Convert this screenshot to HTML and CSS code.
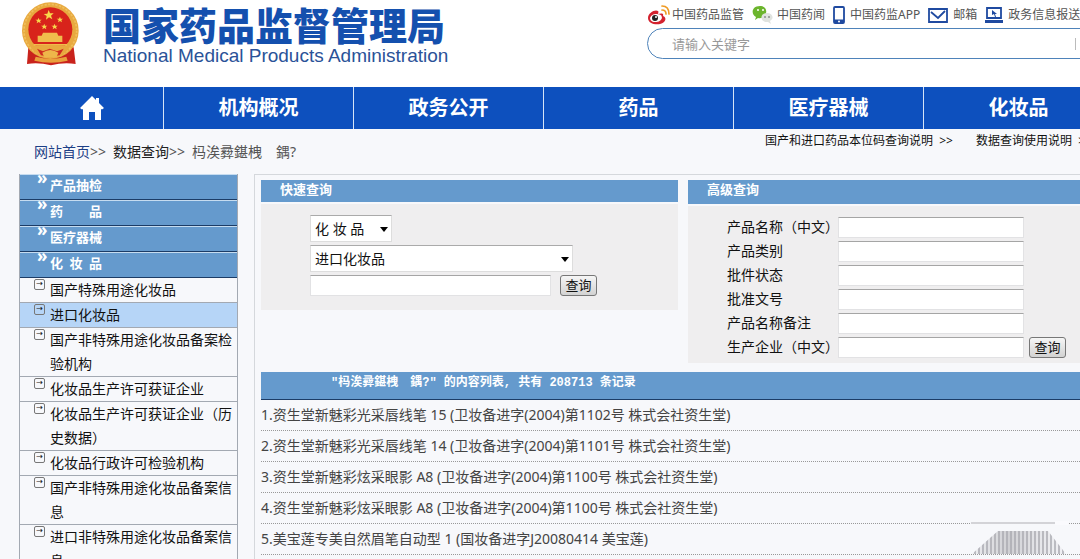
FILE: index.html
```
<!DOCTYPE html>
<html lang="zh-CN">

<head>
    <meta charset="UTF-8">
    <title>国家药品监督管理局 - 数据查询</title>
    <link rel="stylesheet" href="styles.css">
</head>

<body>
    <header>
        <a class="brand" href="#">
            <svg class="emblem" viewBox="12 0 180 198" aria-hidden="true">
                <path d="M40 142 L36 192 Q70 186 108 196 Q146 186 182 192 L176 142 Z" fill="#c9231c" />
                <path d="M62 170 Q108 182 154 170 L158 182 Q108 194 58 182 Z" fill="#e9a03c" />
                <circle cx="106" cy="92" r="85" fill="#e8a93f" />
                <circle cx="106" cy="92" r="79" fill="none" stroke="#f0bf5c" stroke-width="5" stroke-dasharray="7 4" />
                <circle cx="106" cy="88" r="66" fill="#d8231b" />
                <path d="M101 30l4 10 11 0-8 7 4 11-10-6-9 7 2-11-9-6 11-1z" fill="#f8d84c" />
                <path d="M71 53l2 6 7 0-5 4 2 7-6-4-6 4 2-7-6-4 7 0zM135 50l2 6 7 0-5 4 2 7-6-4-6 4 2-7-6-4 7 0zM88 71l2 6 7 0-5 4 2 7-6-4-6 4 2-7-6-4 7 0zM119 71l2 6 7 0-5 4 2 7-6-4-6 4 2-7-6-4 7 0z" fill="#f8d84c" />
                <path d="M84 98h42l4 9h12v19H68v-19h12z" fill="#f0bd4c" />
                <path d="M56 132h100v5H56z" fill="#f0bd4c" />
                <path d="M48 140 Q106 128 164 140 Q150 172 106 174 Q62 172 48 140Z" fill="#e8a93f" />
                <path d="M66 146l18 8 20-8 22 8 20-8-12 20-28 4-28-4z" fill="#cf2c1f" />
                <path d="M82 158 Q106 142 130 158 L124 172 H88Z" fill="#eeb64a" />
            </svg>
            <div class="brand_text">
                <h1>国家药品监督管理局</h1>
                <p>National Medical Products Administration</p>
            </div>
        </a>
        <div class="tools">
            <nav class="quick_links">
                <a class="weibo" href="#">
                    <svg width="23" height="20" viewBox="0 0 23 20" aria-hidden="true">
                        <path d="M1 13C1 8 8 4 11 6c1 1 0 2 0 3 3-1 6-1 5 2 3 1 3 4 1 6-4 4-16 3-16-4z" fill="#d3222f" />
                        <ellipse cx="9" cy="13" rx="6" ry="4" fill="#fff" transform="rotate(-8 9 13)" />
                        <circle cx="8" cy="13" r="3" fill="#222" />
                        <circle cx="9" cy="12" r="1" fill="#fff" />
                        <path d="M15 5q4 0 4 4M15 1q7 0 7 8" fill="none" stroke="#ef9c26" stroke-width="1.7" stroke-linecap="round" />
                    </svg>
                    中国药品监管
                </a>
                <a class="wechat" href="#">
                    <svg width="23" height="20" viewBox="0 0 23 20" aria-hidden="true">
                        <path d="M8 1c-9 0-9 9-4 11l-1 3 3-2c9 2 12-12 2-12z" fill="#6cb52d" />
                        <path d="M15 8c-8 0-7 10 1 9l3 2-1-3c5-3 2-8-3-8z" fill="#e0e3df" />
                        <circle cx="6" cy="5" r="1" fill="#fff" />
                        <circle cx="11" cy="5" r="1" fill="#fff" />
                        <circle cx="13" cy="12" r="1" fill="#8c918b" />
                        <circle cx="17" cy="12" r="1" fill="#8c918b" />
                    </svg>
                    中国药闻
                </a>
                <a class="app" href="#">
                    <svg width="12" height="18" viewBox="0 0 12 18" aria-hidden="true">
                        <rect x="1" y="1" width="10" height="16" rx="1" fill="#fff" stroke="#1f4aa0" stroke-width="1.8" />
                        <path d="M1 13.500h10V17H1z" fill="#1f4aa0" />
                        <circle cx="6" cy="15.500" r="1" fill="#fff" />
                    </svg>
                    中国药监APP
                </a>
                <a class="mail" href="#">
                    <svg width="20" height="15" viewBox="0 0 20 15" aria-hidden="true">
                        <path d="M1 1h18v13H1zM3 4l7 6 7-7" fill="#fff" stroke="#1f4aa0" stroke-width="1.8" />
                    </svg>
                    邮箱
                </a>
                <a class="report" href="#">
                    <svg width="18" height="17" viewBox="0 0 18 17" aria-hidden="true">
                        <path d="M2 1h14v10H2z" fill="#fff" stroke="#1f4aa0" stroke-width="1.800" />
                        <path d="M0 13h18v3H0z" fill="#1f4aa0" />
                        <path d="M7 3l5 4-2 0 1 3-1 0-1-3-2 1z" fill="#1f4aa0" />
                    </svg>
                    政务信息报送
                </a>
            </nav>
            <form class="search">
                <input type="search" placeholder="请输入关键字" aria-label="请输入关键字">
                <button type="button" aria-label="搜索"></button>
            </form>
        </div>
    </header>

    <nav class="menu">
        <a class="home" href="#" aria-label="首页">
            <svg width="24" height="24" viewBox="0 0 24 24" aria-hidden="true">
                <path d="M12 0 0 12l2 1.500 1-.5v11h6v-8h6v8h6V13l1 .5 2-1.500-5-5V2h-3v2z" fill="#fff" />
            </svg>
        </a>
        <a href="#">机构概况</a>
        <a href="#">政务公开</a>
        <a href="#">药品</a>
        <a href="#">医疗器械</a>
        <a href="#">化妆品</a>
    </nav>

    <div class="crumb_bar">
        <p class="crumbs"><a href="#">网站首页</a>&gt;&gt;&ensp;<a class="current" href="#">数据查询</a>&gt;&gt;&ensp;杩涘彛鍖栧&#12288;鍝?</p>
        <div class="help_links">
            <a href="#">国产和进口药品本位码查询说明 &nbsp;&gt;&gt;</a>
            <a href="#">数据查询使用说明 &nbsp;&gt;&gt;</a>
        </div>
    </div>

    <div class="content">
        <aside>
            <h2>产品抽检</h2>
            <h2>药&#12288;&#12288;品</h2>
            <h2>医疗器械</h2>
            <h2>化&ensp;妆&ensp;品</h2>
            <ul>
                <li><a href="#">国产特殊用途化妆品</a></li>
                <li class="valgt"><a href="#">进口化妆品</a></li>
                <li><a href="#">国产非特殊用途化妆品备案检验机构</a></li>
                <li><a href="#">化妆品生产许可获证企业</a></li>
                <li><a href="#">化妆品生产许可获证企业（历史数据）</a></li>
                <li><a href="#">化妆品行政许可检验机构</a></li>
                <li><a href="#">国产非特殊用途化妆品备案信息</a></li>
                <li><a href="#">进口非特殊用途化妆品备案信息</a></li>
            </ul>
        </aside>

        <main>
            <div class="queries">
                <section class="quick">
                    <h2>快速查询</h2>
                    <form>
                        <div class="select short">
                            <select aria-label="类别">
                                <option>化 妆 品</option>
                            </select>
                        </div>
                        <div class="select">
                            <select aria-label="数据库">
                                <option>进口化妆品</option>
                            </select>
                        </div>
                        <div class="line">
                            <input type="text" aria-label="关键字">
                            <button type="button">查询</button>
                        </div>
                    </form>
                </section>

                <section class="advanced">
                    <h2>高级查询</h2>
                    <form>
                        <label for="navn">产品名称（中文）</label>
                        <input type="text" id="navn">
                        <label for="type">产品类别</label>
                        <input type="text" id="type">
                        <label for="status">批件状态</label>
                        <input type="text" id="status">
                        <label for="nummer">批准文号</label>
                        <input type="text" id="nummer">
                        <label for="note">产品名称备注</label>
                        <input type="text" id="note">
                        <label for="firma">生产企业（中文）</label>
                        <input type="text" id="firma">
                        <button type="button">查询</button>
                    </form>
                </section>
            </div>

            <section class="results">
                <h2>"杩涘彛鍖栧&#12288;鍝?" 的内容列表, 共有 208713 条记录</h2>
                <ul>
                    <li><a href="#">1.资生堂新魅彩光采唇线笔 15 (卫妆备进字(2004)第1102号 株式会社资生堂)</a></li>
                    <li><a href="#">2.资生堂新魅彩光采唇线笔 14 (卫妆备进字(2004)第1101号 株式会社资生堂)</a></li>
                    <li><a href="#">3.资生堂新魅彩炫采眼影 A8 (卫妆备进字(2004)第1100号 株式会社资生堂)</a></li>
                    <li><a href="#">4.资生堂新魅彩炫采眼影 A8 (卫妆备进字(2004)第1100号 株式会社资生堂)</a></li>
                    <li><a href="#">5.美宝莲专美自然眉笔自动型 1 (国妆备进字J20080414 美宝莲)</a></li>
                </ul>
            </section>
        </main>
    </div>

    <svg class="stamp" viewBox="0 0 110 36" aria-hidden="true">
        <defs>
            <pattern id="bars" width="4" height="36" patternUnits="userSpaceOnUse">
                <path d="M1 0v36" stroke="#a9a9b0" stroke-width="1.500" />
            </pattern>
            <linearGradient id="fade">
                <stop offset="0" stop-color="#d5d5d8" stop-opacity="0.3" />
                <stop offset="0.400" stop-color="#cfcfd3" />
                <stop offset="1" stop-color="#e8e8ec" stop-opacity="0.4" />
            </linearGradient>
        </defs>
        <path d="M1 2h84" stroke="#d3d3d7" stroke-width="2" />
        <path d="M85 0h14v4H85z" fill="#fafafd" />
        <path d="M2 33 28 10h50l18 23z" fill="url(#fade)" />
        <path d="M2 33 28 10h50l18 23z" fill="url(#bars)" />
    </svg>
</body>

</html>
```
FILE: styles.css
```
* {
    box-sizing: border-box;
}

html {
    overflow: hidden;
}

body {
    margin: 0;
    background: #f7f8fb;
    font-family: "Noto Sans", "Noto Sans CJK SC", sans-serif;
    font-size: 14px;
    line-height: 24px;
    color: #333;
}

h1,
h2,
p,
ul {
    margin: 0;
    padding: 0;
}

ul {
    list-style: none;
}

a {
    color: inherit;
    text-decoration: none;
}

input,
select,
button {
    font: inherit;
    color: #111;
    margin: 0;
}

header {
    background: white;
    display: flex;
    height: 87px;
    padding-left: 19px;
    overflow: hidden;
}

.brand {
    display: flex;
    flex: none;
    gap: 24px;
    width: 628px;
}

.emblem {
    width: 60px;
    height: 66px;
}

.brand h1 {
    font-size: 38px;
    line-height: 40px;
    padding: 5px 0 1px;
    font-weight: 900;
    color: #1450ae;
    white-space: nowrap;
}

.brand p {
    font-family: "Liberation Sans", sans-serif;
    font-size: 19px;
    line-height: 20px;
    color: #2a5298;
}

.tools {
    flex: none;
    width: 480px;
}

.quick_links {
    display: flex;
    height: 28px;
    padding-top: 2px;
    gap: 8px;
    font-size: 12px;
    color: #555;
    white-space: nowrap;
}

.quick_links a {
    display: flex;
    align-items: center;
    gap: 2px;
}

.quick_links .app,
.quick_links .mail,
.quick_links .report {
    gap: 5px;
}

.search {
    display: flex;
    align-items: center;
    height: 31px;
    padding-left: 24px;
    border: 1px solid #4e83ba;
    border-radius: 16px;
    background: white;
}

.search input {
    flex: 1;
    padding: 0;
    border: 0;
    background: none;
    font-size: 13px;
    appearance: none;
}

.search input::placeholder {
    color: #999;
}

.search button {
    width: 51px;
    height: 12px;
    border: 0;
    border-left: 1px solid #bbb;
    border-radius: 0;
    background: none;
}

.menu {
    display: flex;
    height: 42px;
    background: #0d50be;
    color: white;
    overflow: hidden;
}

.menu a {
    flex: none;
    width: 190px;
    border-left: 1px solid #d5e4f7;
    font-size: 20px;
    font-weight: bold;
    line-height: 42px;
    text-align: center;
}

.menu .home {
    display: flex;
    width: 163px;
    padding-left: 20px;
    border-left: 0;
    justify-content: center;
    align-items: center;
}

.crumb_bar {
    display: flex;
    height: 45px;
    padding-left: 34px;
    white-space: nowrap;
    overflow: hidden;
}

.crumbs {
    flex: none;
    width: 731px;
    padding-top: 11px;
    color: #555;
}

.crumbs a {
    color: #1d3f86;
}

.crumbs .current {
    color: #222;
}

.help_links {
    display: flex;
    gap: 23px;
    font-size: 12px;
    color: #111;
}

.content {
    display: flex;
    gap: 16px;
    padding-left: 19px;
}

aside {
    flex: none;
    width: 219px;
    border: 1px solid #a3a9b2;
    border-top: 0;
}

aside h2 {
    position: relative;
    height: 26px;
    padding-left: 30px;
    border-top: 1px solid #c6dcf0;
    border-bottom: 1px solid #1c3c66;
    background: #659acd;
    color: white;
    font-size: 13px;
    line-height: 20px;
}

aside h2::before {
    content: "»";
    position: absolute;
    left: 17px;
    top: -7px;
    font-size: 17px;
}

aside li {
    position: relative;
    padding: 0 4px 0 30px;
    border-bottom: 1px solid #a3a9b2;
    color: #111;
}

aside li::before {
    content: "→";
    position: absolute;
    left: 14px;
    top: 1px;
    width: 9px;
    height: 9px;
    border: 1px solid #777;
    border-radius: 2px;
    font-family: "DejaVu Sans", sans-serif;
    font-size: 8px;
    line-height: 8px;
    text-align: center;
}

aside .valgt {
    background: #b6d5f7;
}

main {
    flex: 1;
    min-width: 0;
    padding: 5px 0 0 6px;
    border-left: 1px solid #d5d8dc;
    border-top: 1px solid #d5d8dc;
}

main h2 {
    background: #659acd;
    color: white;
    font-size: 13px;
}

.queries {
    display: grid;
    grid-template-columns: 417px 1fr;
    gap: 10px;
    align-items: start;
}

.queries h2 {
    height: 22px;
    padding-left: 19px;
    line-height: 18px;
}

.queries form {
    margin-top: 2px;
    background: #efeeef;
}

.quick form {
    display: flex;
    flex-direction: column;
    gap: 3px;
    height: 106px;
    padding: 11px 0 0 49px;
}

.select {
    position: relative;
    width: 263px;
}

.select.short {
    width: 82px;
}

.select::after {
    content: "";
    position: absolute;
    right: 4px;
    top: 12px;
    border: 4px solid transparent;
    border-top: 5px solid black;
    border-bottom: 0;
}

select {
    display: block;
    width: 100%;
    height: 27px;
    padding: 0 4px;
    border: 1px solid #ddd;
    border-top-color: #aaa;
    border-radius: 0;
    background: white;
    appearance: none;
}

.line {
    display: flex;
    gap: 9px;
}

input[type=text] {
    width: 241px;
    height: 21px;
    padding: 0 4px;
    border: 1px solid #e2e2e4;
    border-top-color: #a5a5a5;
    background: white;
}

button {
    width: 37px;
    height: 21px;
    padding: 0;
    border: 1px solid #777;
    border-radius: 3px;
    background: linear-gradient(#f6f6f6, #d2d2d2);
    font-size: 13px;
    line-height: 17px;
}

.advanced h2 {
    height: 24px;
}

.advanced form {
    display: grid;
    grid-template-columns: 111px 186px 42px;
    grid-auto-rows: 24px;
    align-items: center;
    padding: 9px 0 4px 39px;
}

.advanced label {
    grid-column: 1;
    white-space: nowrap;
    color: #111;
}

.advanced input[type=text] {
    width: 186px;
}

.advanced button {
    margin-left: 5px;
}

.results {
    padding-top: 9px;
}

.results h2 {
    height: 28px;
    padding-left: 70px;
    border-bottom: 1px solid #1c3c66;
    font-family: "Liberation Mono", "Noto Sans CJK SC", monospace;
    font-size: 12px;
    line-height: 22px;
}

.results li {
    height: 31px;
    line-height: 30px;
    border-bottom: 1px dotted #999;
    white-space: nowrap;
    color: #444;
}

/* faded mark in the corner */
.stamp {
    position: fixed;
    right: 0;
    bottom: 2px;
    width: 110px;
    height: 36px;
}
```
